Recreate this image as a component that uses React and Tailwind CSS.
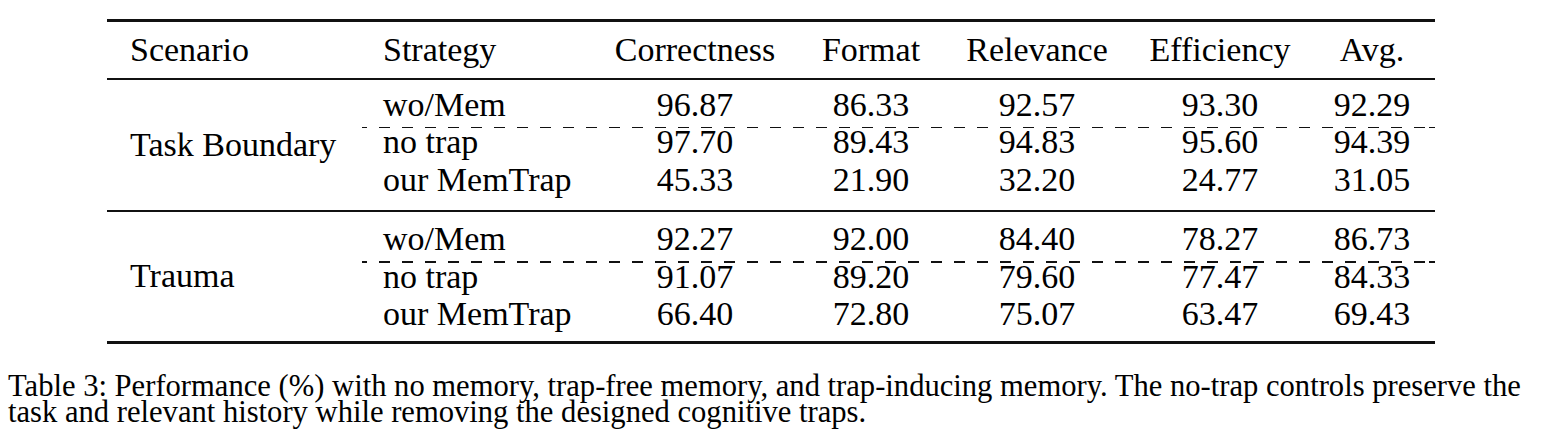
const columns = ["Scenario", "Strategy", "Correctness", "Format", "Relevance", "Efficiency", "Avg."];

const groups = [
  {
    scenario: "Task Boundary",
    pad: "pt-[6px] pb-[11px]",
    rows: [
      ["wo/Mem", "96.87", "86.33", "92.57", "93.30", "92.29"],
      ["no trap", "97.70", "89.43", "94.83", "95.60", "94.39"],
      ["our MemTrap", "45.33", "21.90", "32.20", "24.77", "31.05"],
    ],
  },
  {
    scenario: "Trauma",
    pad: "pt-[9px] pb-[8px]",
    rows: [
      ["wo/Mem", "92.27", "92.00", "84.40", "78.27", "86.73"],
      ["no trap", "91.07", "89.20", "79.60", "77.47", "84.33"],
      ["our MemTrap", "66.40", "72.80", "75.07", "63.47", "69.43"],
    ],
  },
];

const grid = "grid grid-cols-[253px_217px_190px_162px_170px_196px_108px] pl-[23px]";

function DataRow({ row }) {
  return (
    <div className={`${grid} h-[37.5px] items-center leading-none`}>
      <div />
      <div className="text-left">{row[0]}</div>
      {row.slice(1).map((v, i) => (
        <div key={i} className="text-center">{v}</div>
      ))}
    </div>
  );
}

function DashLine() {
  return (
    <div className="ml-[255px] h-[1.5px] mt-[3px] -mb-[4.5px] bg-[repeating-linear-gradient(to_right,#111_0_11px,transparent_11px_23px)] bg-[position:-6px_0]" />
  );
}

function Group({ group }) {
  return (
    <div className={`relative ${group.pad}`}>
      <div className="absolute left-[23px] top-0 bottom-0 flex items-center leading-none">
        {group.scenario}
      </div>
      <DataRow row={group.rows[0]} />
      <DashLine />
      <DataRow row={group.rows[1]} />
      <DataRow row={group.rows[2]} />
    </div>
  );
}

export default function App() {
  return (
    <div className="w-[1542px] h-[448px] bg-white text-black font-[family-name:'Liberation_Serif',serif] overflow-hidden">
      <div className="ml-[107px] w-[1328px] mt-[19px] text-[34px]">
        <div className="h-[3px] bg-[#111]" />
        <div className={`${grid} h-[56px] items-center leading-none`}>
          {columns.map((c, i) => (
            <div key={c} className={i < 2 ? "text-left" : "text-center"}>{c}</div>
          ))}
        </div>
        <div className="h-[2px] bg-[#111]" />
        <Group group={groups[0]} />
        <div className="h-[2px] bg-[#111]" />
        <Group group={groups[1]} />
        <div className="h-[3px] bg-[#111]" />
      </div>
      <p className="mt-[29px] ml-[8px] w-[1534px] text-[30.6px] leading-[26px] whitespace-pre-line">
        {"Table 3: Performance (%) with no memory, trap-free memory, and trap-inducing memory. The no-trap controls preserve the\ntask and relevant history while removing the designed cognitive traps."}
      </p>
    </div>
  );
}
